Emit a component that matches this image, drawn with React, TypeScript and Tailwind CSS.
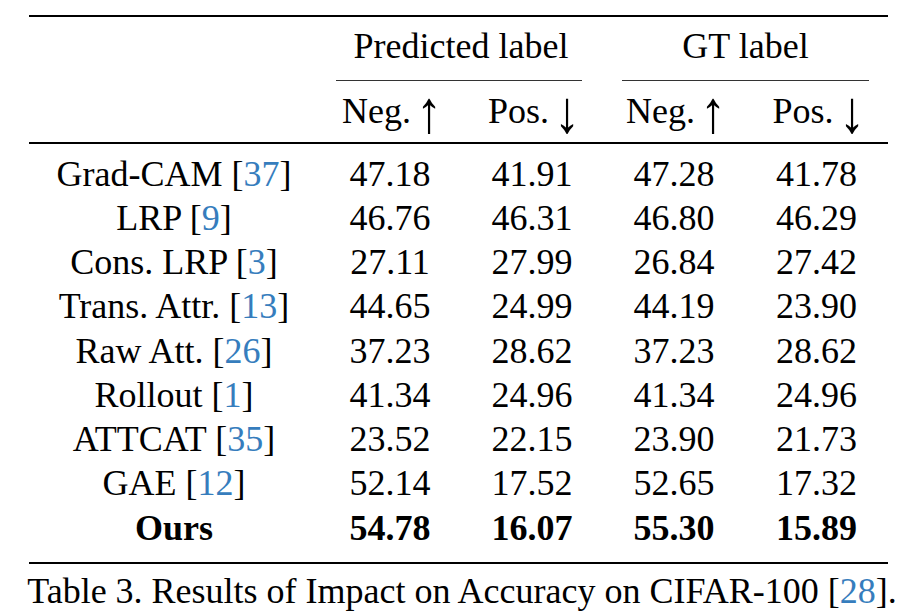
import React from "react";

type Row = { name: string; cite?: string; vals: string[]; bold?: boolean };

const rows: Row[] = [
  { name: "Grad-CAM", cite: "37", vals: ["47.18", "41.91", "47.28", "41.78"] },
  { name: "LRP", cite: "9", vals: ["46.76", "46.31", "46.80", "46.29"] },
  { name: "Cons. LRP", cite: "3", vals: ["27.11", "27.99", "26.84", "27.42"] },
  { name: "Trans. Attr.", cite: "13", vals: ["44.65", "24.99", "44.19", "23.90"] },
  { name: "Raw Att.", cite: "26", vals: ["37.23", "28.62", "37.23", "28.62"] },
  { name: "Rollout", cite: "1", vals: ["41.34", "24.96", "41.34", "24.96"] },
  { name: "ATTCAT", cite: "35", vals: ["23.52", "22.15", "23.90", "21.73"] },
  { name: "GAE", cite: "12", vals: ["52.14", "17.52", "52.65", "17.32"] },
  { name: "Ours", vals: ["54.78", "16.07", "55.30", "15.89"], bold: true },
];

const grid = "grid grid-cols-[290px_142px_142px_142px_143px]";

function Arrow({ up }: { up: boolean }) {
  return (
    <span className="inline-block scale-x-[1.45] scale-y-[1.65] translate-y-[1px]">
      {up ? "↑" : "↓"}
    </span>
  );
}

export default function App() {
  return (
    <div className="w-[924px] h-[615px] bg-white text-black font-['Liberation_Serif',serif] text-[36px] overflow-hidden">
      <div className="pt-[15px] pl-[29px]">
        <div className="w-[859px]">
          <div className="h-[2px] bg-black" />
          <div className={`${grid} mt-[7px] h-[44px] leading-[44px]`}>
            <div />
            <div className="col-span-2 text-center">Predicted label</div>
            <div className="col-span-2 text-center">GT label</div>
          </div>
          <div className={`${grid} mt-[12px]`}>
            <div />
            <div className="col-span-2 pl-[17px] pr-[21px]">
              <div className="h-[1px] bg-[#333]" />
            </div>
            <div className="col-span-2 pl-[19px] pr-[19px]">
              <div className="h-[1px] bg-[#333]" />
            </div>
          </div>
          <div className={`${grid} mt-[8px] h-[44px] leading-[44px]`}>
            <div />
            <div className="text-center">
              Neg. <Arrow up />
            </div>
            <div className="text-center">
              Pos. <Arrow up={false} />
            </div>
            <div className="text-center">
              Neg. <Arrow up />
            </div>
            <div className="text-center">
              Pos. <Arrow up={false} />
            </div>
          </div>
          <div className="mt-[9px] h-[1.5px] bg-black" />
          <div className="mt-[8px]">
            {rows.map((r) => (
              <div
                key={r.name}
                className={`${grid} h-[44.25px] leading-[44.25px] ${r.bold ? "font-bold" : ""}`}
              >
                <div className="text-center">
                  {r.name}
                  {r.cite && (
                    <>
                      {" "}[<span className="text-[#367dbd]">{r.cite}</span>]
                    </>
                  )}
                </div>
                {r.vals.map((v, i) => (
                  <div key={i} className="text-center">
                    {v}
                  </div>
                ))}
              </div>
            ))}
          </div>
          <div className="mt-[12px] h-[2px] bg-black" />
        </div>
      </div>
      <div className="mt-[5px] text-center leading-[44px]">
        Table 3. Results of Impact on Accuracy on CIFAR-100 [<span className="text-[#367dbd]">28</span>].
      </div>
    </div>
  );
}
